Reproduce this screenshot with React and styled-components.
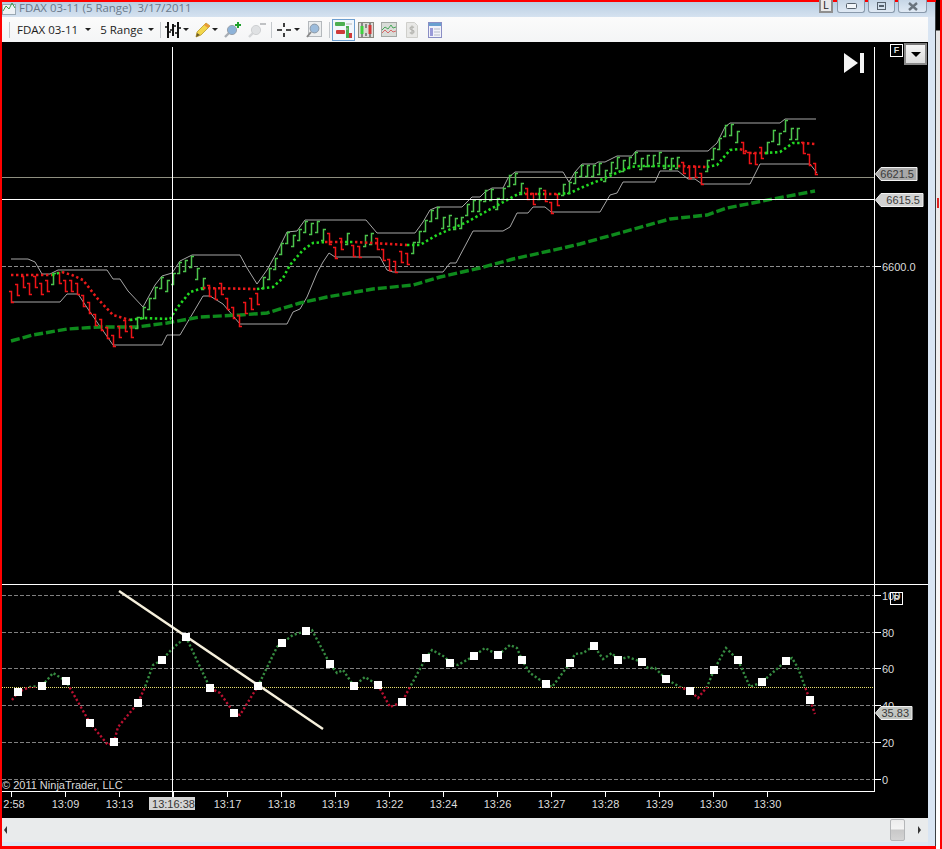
import React from 'react'
import styled, { createGlobalStyle } from 'styled-components'

const Global = createGlobalStyle`
html, body { margin: 0; padding: 0; background: #f00; }
`
const Page = styled.div`
display: flex;
width: 942px;
height: 849px;
background: #f00;
overflow: hidden;
font-family: "Open Sans", "Liberation Sans", sans-serif;
`
const Win = styled.div`
display: flex;
flex-direction: column;
width: 933px;
height: 844px;
margin: 2px 0 3px 2px;
background: #d9e5f3;
border-right: 1px solid #3a3f44;
`
const Edge = styled.div`
width: 4px;
background: linear-gradient(#000 0 30px, #e4e4e4 31px, #fff 100%);
position: relative;
&::after {
  content: '';
  position: absolute;
  left: 1px;
  top: 198px;
  width: 2px;
  height: 10px;
  background: #d22;
}
`
const TitleBar = styled.div`
display: flex;
align-items: flex-start;
height: 15px;
padding: 0 8px 0 0;
background: linear-gradient(#b9cee2, #d5e2f0);
`
const TitleText = styled.span`
margin: -3px auto 0 3px;
font-size: 11.4px;
line-height: 17px;
color: #69788a;
white-space: pre;
`
const WinBtn = styled.div`
display: flex;
align-items: center;
justify-content: center;
width: ${p => p.$w}px;
height: 13px;
margin-left: ${p => p.$ml}px;
margin-top: -2px;
box-sizing: border-box;
border: 1px solid #8a9aac;
border-top: 0;
border-radius: 0 0 3px 3px;
background: linear-gradient(#c6d6e6, #dfe9f4);
`
const PinBtn = styled(WinBtn)`
border: 2px solid #8f8f8f;
border-top: 0;
border-radius: 0;
background: #e8e8e8;
font: 10px "Liberation Sans", sans-serif;
color: #222;
`
const Toolbar = styled.div`
display: flex;
align-items: center;
width: 926px;
height: 25px;
padding-left: 7px;
box-sizing: border-box;
background: linear-gradient(#fbfbfb, #f4f5f6);
color: #1c1c1c;
`
const Sep = styled.div`
width: 1px;
height: 16px;
margin-left: ${p => p.$ml}px;
background: #c4c8cc;
`
const Label = styled.span`
margin-left: ${p => p.$ml}px;
font-size: 11.5px;
white-space: nowrap;
`
const Caret = styled.div`
width: 0;
height: 0;
margin-left: ${p => p.$ml}px;
border: 3px solid transparent;
border-top: 3px solid #222;
border-bottom: 0;
`
const Tool = styled.div`
display: flex;
align-items: center;
justify-content: center;
margin-left: ${p => p.$ml}px;
width: ${p => p.$w}px;
height: 22px;
box-sizing: border-box;
border: ${p => (p.$active ? '1px solid #6d9fd0' : '0')};
background: ${p => (p.$active ? '#f2f7fc' : 'transparent')};
`
const ChartArea = styled.div`
position: relative;
width: 926px;
height: 776px;
background: #000;
`
const ChartSvg = styled.svg`
display: block;
width: 926px;
height: 776px;
`
const AxisText = styled.text`
font: 11px "Liberation Sans", Arial, sans-serif;
fill: ${p => p.$fill || '#dcdcdc'};
text-anchor: ${p => p.$anchor || 'start'};
`
const PanelTag = styled.div`
position: absolute;
left: ${p => p.$x}px;
top: ${p => p.$y}px;
width: 13px;
height: 13px;
box-sizing: border-box;
border: 1px solid #fff;
background: transparent;
color: #ddd;
font: bold 9px/11px "Liberation Sans", sans-serif;
text-align: center;
`
const DropBtn = styled.div`
position: absolute;
left: 902px;
top: 1px;
width: 23px;
height: 22px;
box-sizing: border-box;
border: 2px solid #8a8a8a;
border-top-color: #777;
background: linear-gradient(#f4f4f4, #dcdcdc);
display: flex;
align-items: center;
justify-content: center;
&::after {
  content: '';
  border: 5px solid transparent;
  border-top: 5px solid #000;
  border-bottom: 0;
}
`
const JumpIcon = styled.svg`
position: absolute;
left: 840px;
top: 11px;
`
const ScrollBar = styled.div`
display: flex;
align-items: center;
justify-content: space-between;
width: 926px;
height: 24px;
box-sizing: border-box;
padding: 0 7px 0 2px;
background: #e9ebec;
`
const Arrow = styled.div`
width: 0;
height: 0;
border-top: 4px solid transparent;
border-bottom: 4px solid transparent;
border-${p => (p.$left ? 'right' : 'left')}: 3px solid #333;
`
const Thumb = styled.div`
width: 15px;
height: 22px;
margin-left: auto;
margin-right: 13px;
box-sizing: border-box;
border: 1px solid #b4b6b8;
border-radius: 2px;
background: linear-gradient(#ececec, #f4f4f4 45%, #c8c8c8 50%, #d4d4d4);
`
const FootStrip = styled.div`
height: 4px;
width: 926px;
background: #dce7f4;
`

// top of each range bar, one bar every 6px from x=12
const barTops = [291, 284, 276, 283, 276, 283, 280, 273, 272, 280, 280, 283, 295, 302, 314, 319, 327, 335, 326, 320, 326, 317, 307, 298, 287, 277, 280, 273, 262, 260, 256, 268, 278, 285, 288, 283, 298, 307, 315, 302, 298, 293, 277, 268, 258, 243, 232, 235, 229, 221, 223, 221, 229, 233, 247, 238, 233, 245, 246, 235, 233, 238, 249, 259, 261, 251, 253, 242, 231, 220, 210, 207, 217, 215, 218, 217, 204, 200, 200, 190, 189, 198, 188, 175, 173, 183, 188, 193, 188, 190, 202, 194, 184, 182, 172, 165, 165, 165, 163, 170, 162, 157, 160, 157, 152, 158, 155, 155, 152, 157, 158, 157, 162, 167, 166, 173, 160, 148, 138, 125, 124, 131, 142, 152, 153, 147, 142, 130, 133, 120, 128, 128, 142, 154, 163]
const redRanges = [[0, 6], [8, 20], [33, 41], [53, 55], [57, 58], [61, 66], [86, 87], [89, 91], [112, 115], [122, 125], [132, 134]]
const isRed = k => redRanges.some(([a, b]) => k >= a && k <= b)

const upperBand = '11,259 28,259 35,262 42,274 50,274 58,270 107,270 113,279 120,279 128,291 143,307 155,285 162,276 172,273 180,261 192,255 240,255 247,268 257,284 267,270 277,252 287,232 297,231 305,220 366,220 377,233 415,233 423,222 430,210 437,207 462,207 472,197 480,197 485,192 492,188 503,188 508,178 515,172 563,172 569,182 575,172 582,164 595,164 598,162 605,162 617,156 632,156 636,151 708,151 717,143 725,127 730,123 780,123 785,119 816,119'
const lowerBand = '11,302 60,302 67,294 78,294 90,312 113,345 162,345 167,335 180,335 190,318 203,296 210,296 223,304 240,324 287,324 293,312 300,309 307,297 317,273 323,262 329,253 335,257 380,257 387,270 393,272 443,272 450,263 456,263 473,231 503,231 510,227 517,213 528,213 533,207 545,207 551,212 600,212 610,195 617,193 623,182 655,182 660,171 678,171 688,179 695,179 702,184 750,184 760,164 810,164 817,173'
const slowAvg = '11,341 33,335 67,329 100,327 137,327 167,323 200,317 240,315 267,313 300,303 327,297 373,289 413,285 440,277 480,268 513,259 563,248 580,244 670,219 707,215 727,208 773,199 815,191'

const median = [
  ['#e81a1a', '11,275 52,275'],
  ['#22d822', '52,275 62,272'],
  ['#e81a1a', '62,272 72,275 83,280 97,298 113,315 130,320'],
  ['#22d822', '130,320 143,318 170,319 177,308 190,292 203,288'],
  ['#e81a1a', '203,288 257,289'],
  ['#22d822', '257,289 273,287 283,278 290,265 303,250 313,243 325,242'],
  ['#e81a1a', '325,242 345,242'],
  ['#22d822', '345,242 355,242'],
  ['#e81a1a', '355,242 407,245'],
  ['#22d822', '407,245 420,245 437,235 467,222 507,200 520,193 525,193'],
  ['#e81a1a', '525,194 538,194'],
  ['#22d822', '538,194 544,194'],
  ['#e81a1a', '544,194 558,194'],
  ['#22d822', '558,194 570,193 583,187 605,178 630,167 640,166 678,166'],
  ['#e81a1a', '678,166 707,167'],
  ['#22d822', '707,167 717,165 730,150 740,149'],
  ['#e81a1a', '740,149 750,153 765,153'],
  ['#22d822', '765,153 780,152 793,143 802,143'],
  ['#e81a1a', '802,143 815,144'],
]

const rsiLine = '12,700 18,692 30,687 42,686 53,673 66,681 90,723 108,745 114,742 118,727 138,703 145,687 153,665 162,660 173,648 186,637 210,688 220,693 234,713 240,715 258,686 277,647 282,643 293,635 306,631 312,630 330,664 337,673 343,670 354,686 365,677 378,685 390,707 402,702 410,687 426,658 432,650 445,657 450,663 458,665 474,656 485,648 498,655 510,645 517,648 522,660 530,673 546,684 552,687 570,663 575,654 583,653 594,646 603,659 612,653 618,660 628,657 642,662 648,668 655,668 666,679 680,687 690,691 698,698 707,687 714,670 726,648 738,660 750,687 762,682 786,661 792,658 798,668 805,687 810,700 815,714'
const rsiSquares = [[18, 692], [42, 686], [66, 681], [90, 723], [114, 742], [138, 703], [162, 660], [186, 637], [210, 688], [234, 713], [258, 686], [282, 643], [306, 631], [330, 664], [354, 686], [378, 685], [402, 702], [426, 658], [450, 663], [474, 656], [498, 655], [522, 660], [546, 684], [570, 663], [594, 646], [618, 660], [642, 662], [666, 679], [690, 691], [714, 670], [738, 660], [762, 682], [786, 661], [810, 700]]

const rsiLevels = [[595, '100'], [632, '80'], [668, '60'], [705, '40'], [742, '20'], [779, '0']]
const timeLabels = ['2:58', '13:09', '13:13', '13:16:38', '13:17', '13:18', '13:19', '13:22', '13:24', '13:26', '13:27', '13:28', '13:29', '13:30', '13:30']

const RangeBars = () => (
  <g strokeWidth="1.5" fill="none">
    {barTops.map((top, k) => {
      const x = 11.5 + 6 * k
      const red = isRed(k)
      const y1 = top + 0.5
      const y2 = top + 11.5
      const d = red
        ? `M${x - 2.5} ${y1}H${x}V${y2}H${x + 2.5}`
        : `M${x - 2.5} ${y2}H${x}V${y1}H${x + 2.5}`
      return <path key={k} d={d} stroke={red ? '#f01418' : '#4cc44c'} />
    })}
  </g>
)

const PriceTag = ({ y, right, fill, text }) => (
  <g>
    <path d={`M875.5 ${y + 7}L881 ${y + 0.5}H${right}V${y + 13.5}H881Z`} fill={fill} stroke="#f2f2f2" strokeWidth="1" />
    <AxisText x={right - 3} y={y + 11} $fill="#3a3a3a" $anchor="end">{text}</AxisText>
  </g>
)

const Chart = () => (
  <ChartSvg viewBox="2 42 926 776">
    <defs>
      <clipPath id="above50"><rect x="0" y="590" width="880" height="97" /></clipPath>
      <clipPath id="below50"><rect x="0" y="687" width="880" height="100" /></clipPath>
    </defs>

    {/* price panel */}
    <line x1="2" x2="875" y1="266.5" y2="266.5" stroke="#8c8c8c" strokeDasharray="4 2" />
    <line x1="2" x2="875" y1="177.5" y2="177.5" stroke="#8f8f80" />
    <polyline points={upperBand} fill="none" stroke="#a6a6a6" />
    <polyline points={lowerBand} fill="none" stroke="#a6a6a6" />
    <polyline points={slowAvg} fill="none" stroke="#0e8a1c" strokeWidth="3.4" strokeDasharray="9 3" />
    <RangeBars />
    {median.map(([color, pts], i) => (
      <polyline key={i} points={pts} fill="none" stroke={color} strokeWidth="2.6" strokeDasharray="2.4 2.6" />
    ))}
    <line x1="2" x2="875" y1="199.5" y2="199.5" stroke="#fff" />

    {/* rsi panel */}
    {rsiLevels.map(([y]) => (
      <line key={y} x1="2" x2="875" y1={y + 0.5} y2={y + 0.5} stroke="#808080" strokeDasharray="4 2" />
    ))}
    <line x1="2" x2="875" y1="687.5" y2="687.5" stroke="#e8e070" strokeDasharray="1 1" />
    <polyline points={rsiLine} fill="none" stroke="#358a40" strokeWidth="2.4" strokeDasharray="2.2 2.2" clipPath="url(#above50)" />
    <polyline points={rsiLine} fill="none" stroke="#b81030" strokeWidth="2.4" strokeDasharray="2.2 2.2" clipPath="url(#below50)" />
    <line x1="119" y1="591" x2="323" y2="729" stroke="#f6f0dc" strokeWidth="2.4" />
    {rsiSquares.map(([x, y]) => (
      <rect key={x} x={x - 4} y={y - 4} width="8" height="8" fill="#fff" />
    ))}

    {/* axes and crosshair */}
    <line x1="2" x2="928" y1="584.5" y2="584.5" stroke="#fff" />
    <line x1="2" x2="875" y1="791.5" y2="791.5" stroke="#fff" />
    <line x1="874.5" x2="874.5" y1="47" y2="792" stroke="#fff" />
    <line x1="172.5" x2="172.5" y1="47" y2="797" stroke="#fff" />
    <line x1="875" x2="881" y1="266.5" y2="266.5" stroke="#fff" />
    <AxisText x="882" y="271">6600.0</AxisText>
    {rsiLevels.map(([y, text]) => (
      <g key={y}>
        <line x1="875" x2="881" y1={y + 0.5} y2={y + 0.5} stroke="#fff" />
        <AxisText x="882" y={y + 5}>{text}</AxisText>
      </g>
    ))}
    <PriceTag y={167} right={917} fill="#a8a8a8" text="6621.5" />
    <PriceTag y={193} right={923} fill="#d2d2d2" text="6615.5" />
    <PriceTag y={706} right={912} fill="#c2c6c2" text="35.83" />

    {/* time axis */}
    <AxisText x="2" y="789">© 2011 NinjaTrader, LLC</AxisText>
    <rect x="149" y="797" width="46" height="13" fill="#d4d4d4" />
    {timeLabels.map((text, i) => {
      const x = 11.5 + 54 * i
      return (
        <g key={i}>
          <line x1={x} x2={x} y1="792" y2="797" stroke="#fff" />
          <AxisText x={i === 0 ? 14 : x} y="808" $anchor="middle" $fill={i === 3 ? '#333' : '#dcdcdc'}>{text}</AxisText>
        </g>
      )
    })}
  </ChartSvg>
)

const BarsIcon = () => (
  <svg width="16" height="16" viewBox="0 0 16 16">
    <path d="M3 0v16M8 2v12M13 0v16" stroke="#111" strokeWidth="2" />
    <path d="M0 5h3M3 10h3M5 8h3M8 4h3M10 11h3M13 6h3" stroke="#111" strokeWidth="1.5" />
  </svg>
)
const PencilIcon = () => (
  <svg width="16" height="16" viewBox="0 0 16 16">
    <path d="M1 15l1-5L11 1l4 3-9 9z" fill="#f2d64c" stroke="#b99a2c" strokeWidth="0.8" />
    <path d="M11 1l4 3-2 2-4-3z" fill="#e99a3a" />
    <path d="M1 15l1-4 3 2z" fill="#6b5a2a" />
  </svg>
)
const LensPlusIcon = ({ ghost }) => (
  <svg width="18" height="18" viewBox="0 0 18 18">
    <path d="M6 11l-5 5" stroke={ghost ? '#d4d6d8' : '#a9aeb4'} strokeWidth="2.4" />
    <circle cx="8" cy="9" r="4.6" fill={ghost ? '#dfe1e3' : '#8db2d8'} stroke={ghost ? '#cfd1d3' : '#9aa2ac'} />
    {ghost
      ? <path d="M12 3h6" stroke="#c0c2c4" strokeWidth="2" />
      : <path d="M14 1v6M11 4h6" stroke="#1fa02c" strokeWidth="2" />}
  </svg>
)
const CrossIcon = () => (
  <svg width="14" height="14" viewBox="0 0 14 14">
    <path d="M0 7h5M9 7h5M7 0v4M7 10v4" stroke="#111" strokeWidth="1.6" />
  </svg>
)
const ZoomBoxIcon = () => (
  <svg width="16" height="17" viewBox="0 0 16 17">
    <rect x="2.5" y="0.5" width="13" height="15" fill="#eceeef" stroke="#b4b8bc" />
    <circle cx="8.5" cy="7.5" r="4.4" fill="#9cbcdc" stroke="#8a98a6" />
    <path d="M5 11l-4 5" stroke="#8a8a8a" strokeWidth="2" />
  </svg>
)
const StyleBarsIcon = () => (
  <svg width="18" height="18" viewBox="0 0 18 18">
    <rect x="0" y="1" width="10" height="4" rx="1" fill="#4cae50" />
    <rect x="1" y="9" width="9" height="4" rx="1" fill="#cf3b3b" />
    <rect x="11" y="5" width="3" height="12" fill="#4cae50" />
    <rect x="14" y="12" width="3" height="5" fill="#cf3b3b" />
    <path d="M11 3h6M11 8h2" stroke="#b8b8b8" />
  </svg>
)
const CandlesIcon = () => (
  <svg width="16" height="16" viewBox="0 0 16 16">
    <rect x="0.5" y="0.5" width="15" height="15" fill="#dcdcd8" stroke="#8a8a80" />
    <path d="M4 1v14M8 2v12M12 1v14" stroke="#333" />
    <rect x="2.5" y="4" width="3" height="8" fill="#3fd03f" />
    <rect x="6.5" y="6" width="3" height="5" fill="#d8d8d0" />
    <rect x="10.5" y="3" width="3" height="9" fill="#d23838" />
  </svg>
)
const LinesIcon = () => (
  <svg width="16" height="15" viewBox="0 0 16 15">
    <rect x="0.5" y="0.5" width="15" height="14" fill="#d9dcd8" stroke="#a4a8a4" />
    <path d="M1 8l3-3 3 2 3-4 2 3 3-1" fill="none" stroke="#47a85a" />
    <path d="M1 11l3-3 3 3 3-3 2 2 3-1" fill="none" stroke="#d86a6a" />
  </svg>
)
const DollarIcon = () => (
  <svg width="12" height="16" viewBox="0 0 12 16">
    <path d="M0.5 0.5h8l3 3v12h-11z" fill="#e8e8e6" stroke="#cfcfcb" />
    <path d="M8 5.5c-1-1-4-1-4 .8s4 1.4 4 3.4-3 1.8-4.2.8M6 3.5v9" fill="none" stroke="#b4b4b0" strokeWidth="1.2" />
  </svg>
)
const FormIcon = () => (
  <svg width="14" height="16" viewBox="0 0 14 16">
    <rect x="0.5" y="0.5" width="13" height="15" fill="#f2f2fa" stroke="#8a8ec4" />
    <rect x="1" y="1" width="12" height="3" fill="#6aa0d0" />
    <rect x="2" y="6" width="3" height="8" fill="#9a9ad8" />
    <path d="M6 7h6M6 10h6M6 13h6" stroke="#b8bcc8" />
  </svg>
)

const App = () => (
  <Page>
    <Global />
    <Win>
      <TitleBar>
        <svg width="14" height="13" viewBox="0 0 14 13">
          <rect x="0.5" y="2.5" width="13" height="10" fill="#eef2f6" stroke="#9aa8b4" />
          <path d="M1 9l3-5 3 3 3-6 3 5" fill="none" stroke="#3f9a50" />
        </svg>
        <TitleText>{'FDAX 03-11 (5 Range)  3/17/2011'}</TitleText>
        <PinBtn $w={14} $ml={0}>L</PinBtn>
        <WinBtn $w={28} $ml={4}>
          <svg width="11" height="6" viewBox="0 0 11 6"><rect x="0.5" y="0.5" width="10" height="5" rx="1" fill="#f2f6fa" stroke="#56616c" /></svg>
        </WinBtn>
        <WinBtn $w={27} $ml={3}>
          <svg width="9" height="8" viewBox="0 0 9 8"><rect x="0.5" y="0.5" width="8" height="7" fill="none" stroke="#56616c" /><rect x="2" y="3" width="5" height="2" fill="#56616c" /></svg>
        </WinBtn>
        <WinBtn $w={29} $ml={3}>
          <svg width="12" height="9" viewBox="0 0 12 9"><path d="M2 1l8 7M10 1L2 8" stroke="#6a747e" strokeWidth="2.4" /></svg>
        </WinBtn>
      </TitleBar>
      <Toolbar>
        <Sep $ml={0} />
        <Label $ml={7}>FDAX 03-11</Label>
        <Caret $ml={7} />
        <Label $ml={9}>5 Range</Label>
        <Caret $ml={5} />
        <Sep $ml={6} />
        <Tool $w={16} $ml={4}><BarsIcon /></Tool>
        <Caret $ml={2} />
        <Tool $w={16} $ml={6}><PencilIcon /></Tool>
        <Caret $ml={1} />
        <Tool $w={18} $ml={6}><LensPlusIcon /></Tool>
        <Tool $w={18} $ml={6}><LensPlusIcon ghost /></Tool>
        <Sep $ml={5} />
        <Tool $w={14} $ml={5}><CrossIcon /></Tool>
        <Caret $ml={3} />
        <Tool $w={16} $ml={6}><ZoomBoxIcon /></Tool>
        <Sep $ml={7} />
        <Tool $w={23} $ml={2} $active><StyleBarsIcon /></Tool>
        <Tool $w={16} $ml={3}><CandlesIcon /></Tool>
        <Tool $w={16} $ml={7}><LinesIcon /></Tool>
        <Tool $w={12} $ml={9}><DollarIcon /></Tool>
        <Tool $w={14} $ml={10}><FormIcon /></Tool>
      </Toolbar>
      <ChartArea>
        <Chart />
        <JumpIcon width="24" height="20" viewBox="0 0 24 20">
          <path d="M2 0l14 10L2 20z" fill="#f4f4f4" />
          <rect x="18" y="0" width="4" height="20" fill="#f4f4f4" />
        </JumpIcon>
        <PanelTag $x={888} $y={2}>F</PanelTag>
        <DropBtn />
        <PanelTag $x={888} $y={550}>P</PanelTag>
      </ChartArea>
      <ScrollBar>
        <Arrow $left />
        <Thumb />
        <Arrow />
      </ScrollBar>
      <FootStrip />
    </Win>
    <Edge />
  </Page>
)

export default App
